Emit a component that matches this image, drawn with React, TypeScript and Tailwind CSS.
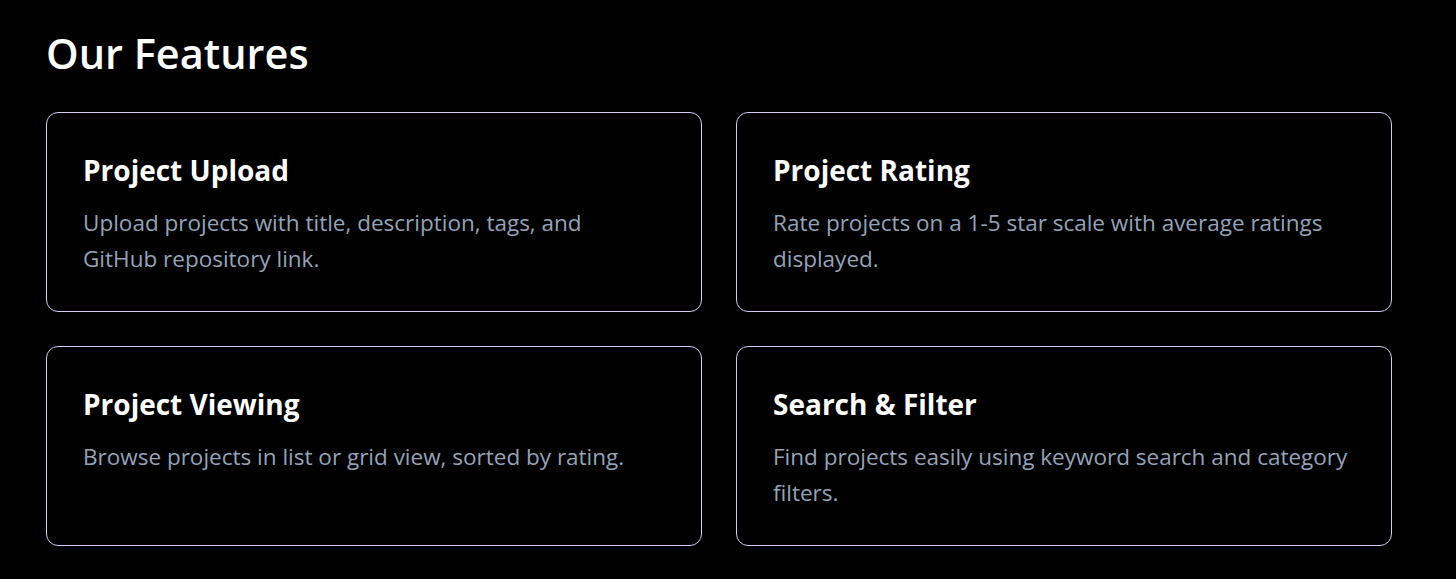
import React from 'react';

interface Feature {
  title: string;
  description: string;
}

// \n marks where the reference wraps the line
const features: Feature[] = [
  {
    title: 'Project Upload',
    description: 'Upload projects with title, description, tags, and\nGitHub repository link.',
  },
  {
    title: 'Project Rating',
    description: 'Rate projects on a 1-5 star scale with average ratings displayed.',
  },
  {
    title: 'Project Viewing',
    description: 'Browse projects in list or grid view, sorted by rating.',
  },
  {
    title: 'Search & Filter',
    description: 'Find projects easily using keyword search and category filters.',
  },
];

const FeatureCard: React.FC<Feature> = ({ title, description }) => (
  <div className="rounded-[12px] border border-[#d6c8f2] bg-black pl-[36px] pr-[34px] pt-[38px] pb-[34px]">
    <h3 className="text-[28px] font-bold leading-[38px] text-white mb-[16px]">{title}</h3>
    <p className="whitespace-pre-line text-[22.5px] leading-[36px] text-[#94a3b8]">{description}</p>
  </div>
);

export default function App() {
  return (
    <div
      className="min-h-[579px] w-full bg-black px-[46px] pt-[26px] pb-[33px]"
      style={{ fontFamily: '"Open Sans", "Noto Sans", sans-serif' }}
    >
      <h2 className="text-[41.5px] font-semibold leading-[54px] text-white mb-[32px]">Our Features</h2>
      <div className="grid w-[1346px] grid-cols-2 gap-x-[34px] gap-y-[34px]">
        {features.map((f) => (
          <FeatureCard key={f.title} title={f.title} description={f.description} />
        ))}
      </div>
    </div>
  );
}
